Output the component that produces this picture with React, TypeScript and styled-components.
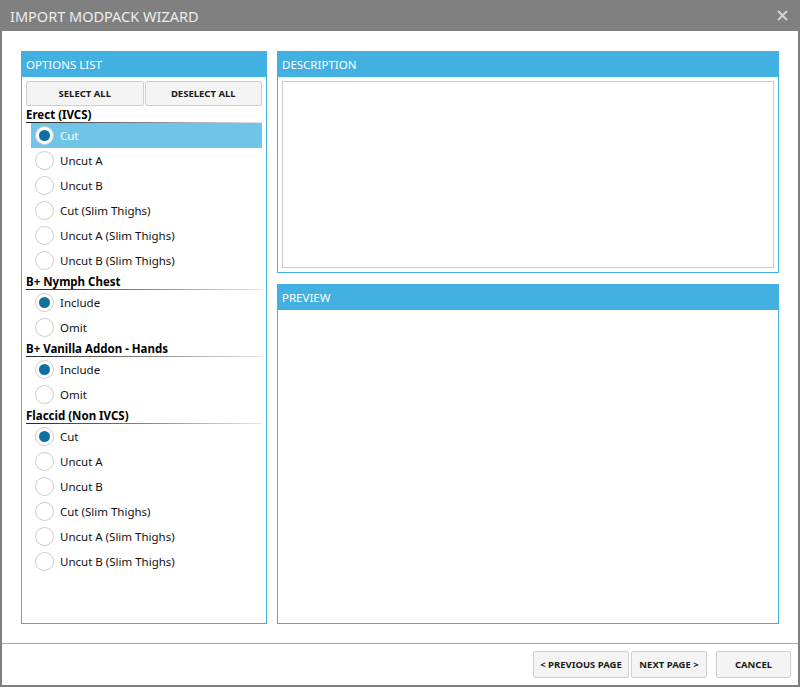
import styled, { createGlobalStyle } from 'styled-components';

const GlobalStyle = createGlobalStyle`
  html, body {
    margin: 0;
    padding: 0;
    background: #ffffff;
  }
  body {
    font-family: "Noto Sans", "Open Sans", sans-serif;
  }
  * {
    box-sizing: border-box;
  }
`;

const Window = styled.div`
  width: 800px;
  height: 687px;
  display: flex;
  flex-direction: column;
  background: #808080;
  padding: 0 2px 2px 2px;
`;

const TitleBar = styled.div`
  height: 31px;
  display: flex;
  align-items: center;
  justify-content: space-between;
  padding: 0 10px 0 8px;
  color: #ececec;
  font-size: 14.5px;
`;

const CloseButton = styled.div`
  width: 12px;
  height: 12px;
  display: flex;
  align-items: center;
  justify-content: center;
`;

const Body = styled.div`
  flex: 1;
  display: flex;
  flex-direction: column;
  background: #ffffff;
`;

const Main = styled.div`
  flex: 1;
  display: flex;
  gap: 10px;
  padding: 20px 19px 19px 19px;
`;

const Panel = styled.div<{ $height?: number; $grow?: boolean }>`
  display: flex;
  flex-direction: column;
  border: 1px solid #42b0e0;
  height: ${(p) => (p.$height ? `${p.$height}px` : 'auto')};
  flex: ${(p) => (p.$grow ? 1 : 'none')};
`;

const OptionsPanel = styled(Panel)`
  width: 246px;
`;

const RightColumn = styled.div`
  flex: 1;
  display: flex;
  flex-direction: column;
  gap: 11px;
`;

const PanelHeader = styled.div`
  height: 25px;
  background: #42b0e0;
  color: #ffffff;
  font-size: 11.5px;
  display: flex;
  align-items: center;
  padding-left: 4px;
  flex: none;
`;

const PanelBody = styled.div`
  flex: 1;
  display: flex;
  flex-direction: column;
  padding: 4px;
`;

const TextBox = styled.div`
  flex: 1;
  border: 1px solid #cccccc;
`;

const ButtonRow = styled.div`
  display: flex;
  gap: 1px;
`;

const FlatButton = styled.button<{ $width?: number; $height?: number }>`
  flex: ${(p) => (p.$width ? 'none' : 1)};
  width: ${(p) => (p.$width ? `${p.$width}px` : 'auto')};
  height: ${(p) => p.$height || 25}px;
  background: #f4f4f4;
  border: 1px solid #cfcfcf;
  border-radius: 2px;
  font-family: "Noto Sans", "Open Sans", sans-serif;
  font-weight: 700;
  font-size: 9.5px;
  color: #1a1a1a;
  padding: 0;
  display: flex;
  align-items: center;
  justify-content: center;
`;

const GroupTitle = styled.div`
  height: 17px;
  font-size: 11.5px;
  font-weight: 700;
  color: #000000;
  display: flex;
  align-items: center;
  border-bottom: 1px solid transparent;
  border-image: linear-gradient(to right, #222222, #e8e8e8) 1;
`;

const OptionRow = styled.div<{ $selected?: boolean }>`
  height: 25px;
  display: flex;
  align-items: center;
  gap: 6px;
  margin-left: 5px;
  padding-left: 4px;
  font-size: 11.5px;
  background: ${(p) => (p.$selected ? '#70c4e8' : 'transparent')};
  color: ${(p) => (p.$selected ? '#ffffff' : '#111111')};
`;

const Radio = styled.span<{ $checked?: boolean }>`
  width: 19px;
  height: 19px;
  border-radius: 50%;
  border: 1px solid #cdcdcd;
  background: #ffffff;
  display: flex;
  align-items: center;
  justify-content: center;
  flex: none;

  &::after {
    content: '';
    width: 11px;
    height: 11px;
    border-radius: 50%;
    background: ${(p) => (p.$checked ? '#0f6f9f' : 'transparent')};
  }
`;

const Footer = styled.div`
  height: 42px;
  border-top: 1px solid #a8a8a8;
  display: flex;
  justify-content: flex-end;
  align-items: center;
  padding: 0 7px 0 0;
  gap: 2px;
`;

const Spacer = styled.div`
  width: 5px;
`;

type Group = { title: string; options: string[]; checked: number; selected?: boolean };

const groups: Group[] = [
  {
    title: 'Erect (IVCS)',
    options: ['Cut', 'Uncut A', 'Uncut B', 'Cut (Slim Thighs)', 'Uncut A (Slim Thighs)', 'Uncut B (Slim Thighs)'],
    checked: 0,
    selected: true,
  },
  { title: 'B+ Nymph Chest', options: ['Include', 'Omit'], checked: 0 },
  { title: 'B+ Vanilla Addon - Hands', options: ['Include', 'Omit'], checked: 0 },
  {
    title: 'Flaccid (Non IVCS)',
    options: ['Cut', 'Uncut A', 'Uncut B', 'Cut (Slim Thighs)', 'Uncut A (Slim Thighs)', 'Uncut B (Slim Thighs)'],
    checked: 0,
  },
];

export default function App() {
  return (
    <>
      <GlobalStyle />
      <Window>
        <TitleBar>
          <span>IMPORT MODPACK WIZARD</span>
          <CloseButton>
            <svg width="11" height="11" viewBox="0 0 11 11">
              <path d="M1 1 L10 10 M10 1 L1 10" stroke="#d4d4d4" strokeWidth="2" />
            </svg>
          </CloseButton>
        </TitleBar>
        <Body>
          <Main>
            <OptionsPanel>
              <PanelHeader>OPTIONS LIST</PanelHeader>
              <PanelBody>
                <ButtonRow>
                  <FlatButton>SELECT ALL</FlatButton>
                  <FlatButton>DESELECT ALL</FlatButton>
                </ButtonRow>
                {groups.map((g) => (
                  <div key={g.title}>
                    <GroupTitle>{g.title}</GroupTitle>
                    {g.options.map((o, i) => (
                      <OptionRow key={o} $selected={g.selected && i === g.checked}>
                        <Radio $checked={i === g.checked} />
                        {o}
                      </OptionRow>
                    ))}
                  </div>
                ))}
              </PanelBody>
            </OptionsPanel>
            <RightColumn>
              <Panel $height={222}>
                <PanelHeader>DESCRIPTION</PanelHeader>
                <PanelBody>
                  <TextBox />
                </PanelBody>
              </Panel>
              <Panel $grow>
                <PanelHeader>PREVIEW</PanelHeader>
              </Panel>
            </RightColumn>
          </Main>
          <Footer>
            <FlatButton $width={96} $height={27}>&lt; PREVIOUS PAGE</FlatButton>
            <FlatButton $width={76} $height={27}>NEXT PAGE &gt;</FlatButton>
            <Spacer />
            <FlatButton $width={75} $height={27}>CANCEL</FlatButton>
          </Footer>
        </Body>
      </Window>
    </>
  );
}
